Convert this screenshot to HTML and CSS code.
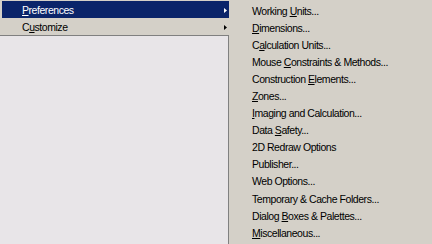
FILE: index.html
```html
<!DOCTYPE html>
<html>
<head>
<meta charset="utf-8">
<link rel="stylesheet" href="styles.css">
</head>
<body>
<div class="screen">
  <div class="left">
    <div class="menu">
      <div class="item active"><span class="label"><u>P</u>references</span><svg class="arrow" width="3" height="5" viewBox="0 0 3 5"><polygon points="0,0 3,2.5 0,5" fill="#ffffff"/></svg></div>
      <div class="item"><span class="label">C<u>u</u>stomize</span><svg class="arrow" width="3" height="5" viewBox="0 0 3 5"><polygon points="0,0 3,2.5 0,5" fill="#000000"/></svg></div>
    </div>
    <div class="panel"></div>
  </div>
  <div class="submenu">
    <div class="sub"><span>Working <u>U</u>nits...</span></div>
    <div class="sub"><span><u>D</u>imensions...</span></div>
    <div class="sub"><span>C<u>a</u>lculation Units...</span></div>
    <div class="sub"><span>Mouse <u>C</u>onstraints &amp; Methods...</span></div>
    <div class="sub"><span>Construction <u>E</u>lements...</span></div>
    <div class="sub"><span><u>Z</u>ones...</span></div>
    <div class="sub"><span><u>I</u>maging and Calculation...</span></div>
    <div class="sub"><span>Data <u>S</u>afety...</span></div>
    <div class="sub"><span>2D Redraw Options</span></div>
    <div class="sub"><span>Publisher...</span></div>
    <div class="sub"><span>Web Options...</span></div>
    <div class="sub"><span>Temporary &amp; Cache Folders...</span></div>
    <div class="sub"><span>Dialog <u>B</u>oxes &amp; Palettes...</span></div>
    <div class="sub"><span><u>M</u>iscellaneous...</span></div>
  </div>
</div>
</body>
</html>
```
FILE: styles.css
```css
html, body {
  margin: 0;
  padding: 0;
}
body {
  width: 432px;
  height: 244px;
  overflow: hidden;
  background: #d4d0c8;
  font-family: "Liberation Sans", Arial, sans-serif;
  font-size: 10.5px;
  letter-spacing: -0.45px;
  color: #000000;
}
u {
  text-decoration: underline;
  text-underline-offset: 1px;
}
.screen {
  display: flex;
  height: 244px;
}
.left {
  width: 230px;
  display: flex;
  flex-direction: column;
  background: #d4d0c8;
}
.menu {
  padding: 1px 0 0 2px;
  height: 34px;
}
.item {
  height: 17px;
  width: 227px;
  display: flex;
  align-items: center;
  box-sizing: border-box;
  padding-left: 20px;
  padding-right: 1px;
  padding-top: 1px;
}
.item.active {
  background: #0a246a;
  color: #ffffff;
}
.label {
  flex: 1;
}
.arrow {
  display: block;
  margin-right: 1px;
}
.panel {
  flex: 1;
  width: 228px;
  background: #e8e5e8;
  border-top: 1px solid #808080;
  border-right: 1px solid #808080;
}
.submenu {
  flex: 1;
  padding: 2px 0 0 22px;
}
.sub {
  height: 17.1px;
  display: flex;
  align-items: center;
  white-space: nowrap;
}
```
